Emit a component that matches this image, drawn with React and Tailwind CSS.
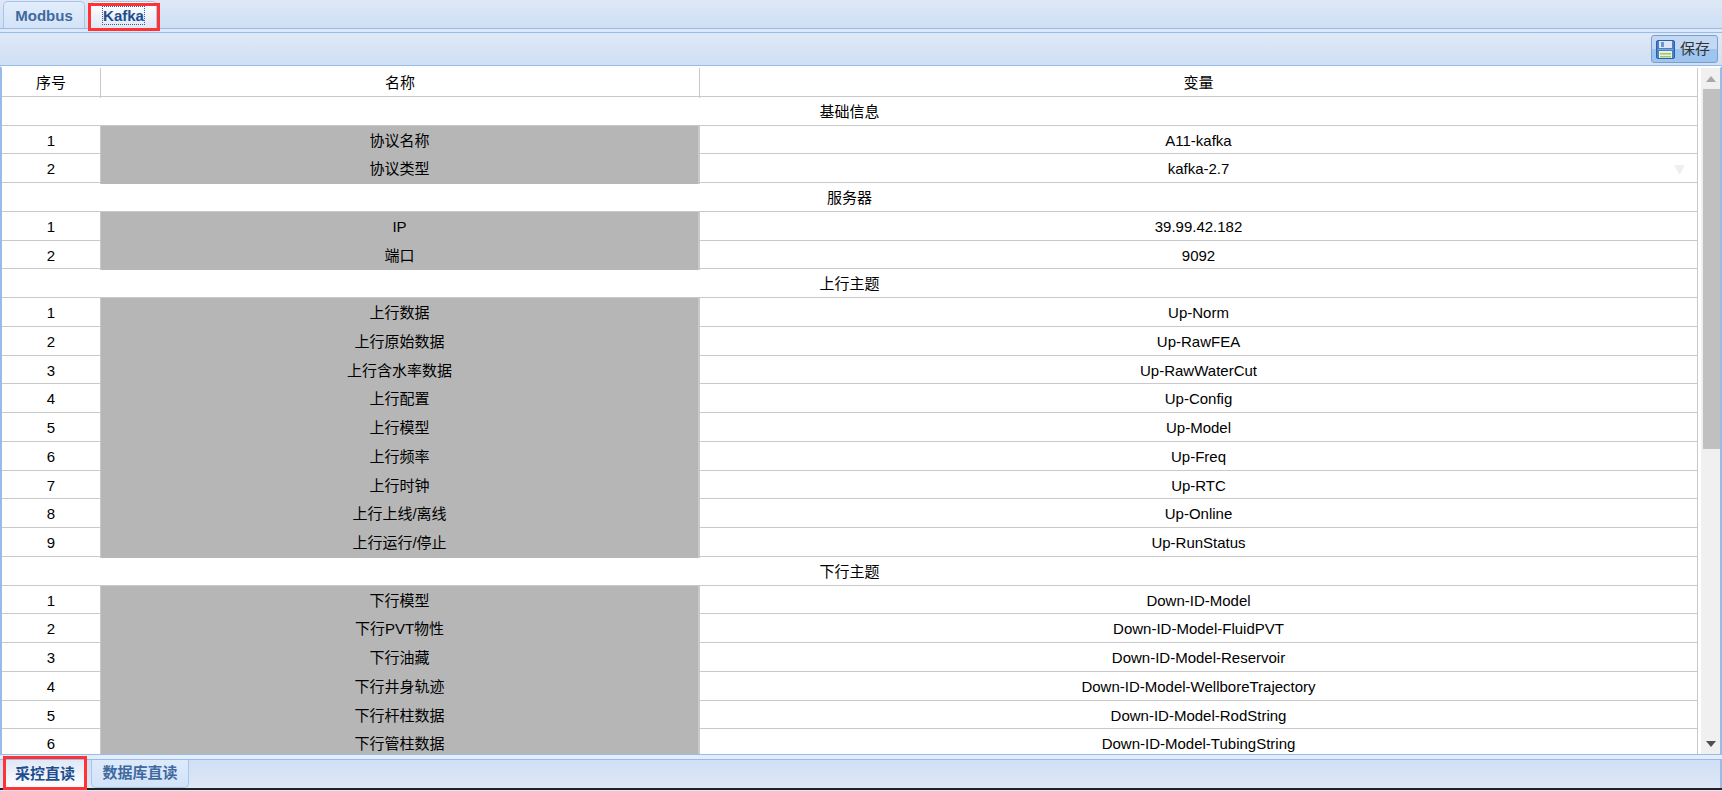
import React from 'react';

const sections = [
  { title: '基础信息', rows: [['协议名称', 'A11-kafka'], ['协议类型', 'kafka-2.7', true]] },
  { title: '服务器', rows: [['IP', '39.99.42.182'], ['端口', '9092']] },
  {
    title: '上行主题',
    rows: [
      ['上行数据', 'Up-Norm'],
      ['上行原始数据', 'Up-RawFEA'],
      ['上行含水率数据', 'Up-RawWaterCut'],
      ['上行配置', 'Up-Config'],
      ['上行模型', 'Up-Model'],
      ['上行频率', 'Up-Freq'],
      ['上行时钟', 'Up-RTC'],
      ['上行上线/离线', 'Up-Online'],
      ['上行运行/停止', 'Up-RunStatus'],
    ],
  },
  {
    title: '下行主题',
    rows: [
      ['下行模型', 'Down-ID-Model'],
      ['下行PVT物性', 'Down-ID-Model-FluidPVT'],
      ['下行油藏', 'Down-ID-Model-Reservoir'],
      ['下行井身轨迹', 'Down-ID-Model-WellboreTrajectory'],
      ['下行杆柱数据', 'Down-ID-Model-RodString'],
      ['下行管柱数据', 'Down-ID-Model-TubingString'],
    ],
  },
];

const rowClass = 'grid h-[28.75px] shrink-0 grid-cols-[99px_599px_1fr] border-b border-[#c9c9c9] leading-[29.5px]';

const SaveIcon = () => (
  <svg width="19" height="19" viewBox="0 0 19 19" className="shrink-0">
    <rect x="0.5" y="0.5" width="18" height="18" rx="1.5" fill="#4a7fc6" stroke="#2f5ea6" />
    <rect x="3" y="1" width="13" height="7" fill="#dbe7f7" />
    <rect x="5" y="2" width="3" height="5" fill="#6a97d3" />
    <rect x="2" y="9" width="15" height="1" fill="#7fa6dc" />
    <rect x="3" y="11" width="13" height="7" fill="#eaf2dc" />
    <rect x="4" y="13" width="11" height="1.5" fill="#9cc56e" />
    <rect x="4" y="16" width="11" height="1.5" fill="#9cc56e" />
  </svg>
);

const App = () => {
  return (
    <div className="relative flex h-[791px] w-[1722px] flex-col overflow-hidden bg-[#dfe8f6] font-['Liberation_Sans','Noto_Sans_CJK_SC',sans-serif] text-[15px] text-black">
      {/* top tabs */}
      <div className="flex h-[29px] shrink-0 items-end gap-[5px] border-b border-[#99bbe8] bg-gradient-to-b from-[#dee8f6] to-[#cedff5] pl-[3px]">
        <div className="flex h-[27px] w-[82px] items-center justify-center rounded-t-[5px] border border-b-0 border-[#a9c5ea] bg-gradient-to-b from-[#e3edfb] to-[#d3e3f8] pt-[2px] font-bold text-[#3f6a9f]">
          Modbus
        </div>
        <div className="flex h-[27px] w-[67px] items-center justify-center rounded-t-[5px] border border-b-0 border-[#a9c5ea] bg-gradient-to-b from-white to-[#dfe8f6] pt-px font-bold text-[#1c4e8f]">
          <span className="border border-dotted border-[#3c5f8c] leading-[17px]">Kafka</span>
        </div>
      </div>
      <div className="h-[3px] shrink-0 bg-[#dfe8f6]" />
      {/* toolbar */}
      <div className="flex h-[34px] shrink-0 items-center justify-end border-y border-[#99bbe8] bg-gradient-to-b from-[#dfe8f6] to-[#cfe0f5] pr-[4px]">
        <button className="flex h-[28px] w-[67px] items-center gap-[5px] rounded-[3px] border border-[#7f9fca] bg-[linear-gradient(#c3d9f3_0_50%,#9ec5f0_50%_100%)] pl-1 text-[#333]">
          <SaveIcon />
          保存
        </button>
      </div>
      {/* table + scrollbar */}
      <div className="flex h-[688px] shrink-0 border-x-2 border-[#99bbe8] border-t-2 border-t-white bg-white">
        <div className="flex min-w-0 flex-1 flex-col overflow-hidden border-r border-[#c9c9c9] text-center">
          <div className={rowClass}>
            <div className="border-r border-[#c9c9c9]">序号</div>
            <div className="border-r border-[#c9c9c9]">名称</div>
            <div>变量</div>
          </div>
          {sections.map((s) => (
            <React.Fragment key={s.title}>
              <div className="h-[28.75px] shrink-0 border-b border-[#c9c9c9] leading-[29.5px]">{s.title}</div>
              {s.rows.map(([name, value, combo], i) => (
                <div key={name} className={rowClass}>
                  <div className="border-r border-[#c9c9c9]">{i + 1}</div>
                  <div className="border-r-2 border-[#c9c9c9] bg-[#b6b6b6]">{name}</div>
                  <div className="relative">
                    {value}
                    {combo && (
                      <svg width="11" height="10" viewBox="0 0 11 10" className="absolute right-[12px] top-[11px]">
                        <path d="M0 0H11L5.5 10Z" fill="#efefef" />
                      </svg>
                    )}
                  </div>
                </div>
              ))}
            </React.Fragment>
          ))}
        </div>
        {/* scrollbar */}
        <div className="ml-[3px] flex w-[19px] shrink-0 flex-col items-end bg-[#f0f0f0]">
          <div className="flex h-[21px] w-full items-center justify-center">
            <svg width="10" height="6" viewBox="0 0 10 6">
              <path d="M0 6H10L5 0Z" fill="#a8a8a8" />
            </svg>
          </div>
          <div className="h-[360px] w-[17px] bg-[#c0c0c0]" />
          <div className="mt-auto flex h-[20px] w-full items-center justify-center">
            <svg width="10" height="6" viewBox="0 0 10 6">
              <path d="M0 0H10L5 6Z" fill="#505050" />
            </svg>
          </div>
        </div>
      </div>
      {/* bottom tabs */}
      <div className="h-[6px] shrink-0 border-y border-[#99bbe8] bg-[#e4edf9]" />
      <div className="flex h-[28px] shrink-0 items-start gap-[4px] border-r-2 border-[#99bbe8] bg-gradient-to-b from-[#cfdff4] to-[#dfe8f6] pl-[3px]">
        <div className="flex h-[28px] w-[84px] items-center justify-center rounded-b-[5px] bg-gradient-to-b from-[#dfe8f6] to-white font-bold text-[#1c4e8f]">
          采控直读
        </div>
        <div className="flex h-[28px] w-[98px] items-center justify-center rounded-b-[5px] border border-t-0 border-[#a9c5ea] bg-gradient-to-b from-[#dceafb] to-[#d3e3f8] font-bold text-[#3f6a9f]">
          数据库直读
        </div>
      </div>
      <div className="h-[2px] shrink-0 bg-[#222]" />
      {/* red annotation boxes */}
      <div className="absolute left-[88px] top-[3px] h-[28px] w-[72px] border-[3px] border-[#ff3333]" />
      <div className="absolute left-[3px] top-[756px] h-[34px] w-[84px] border-[3px] border-[#ff3333]" />
    </div>
  );
};

export default App;
